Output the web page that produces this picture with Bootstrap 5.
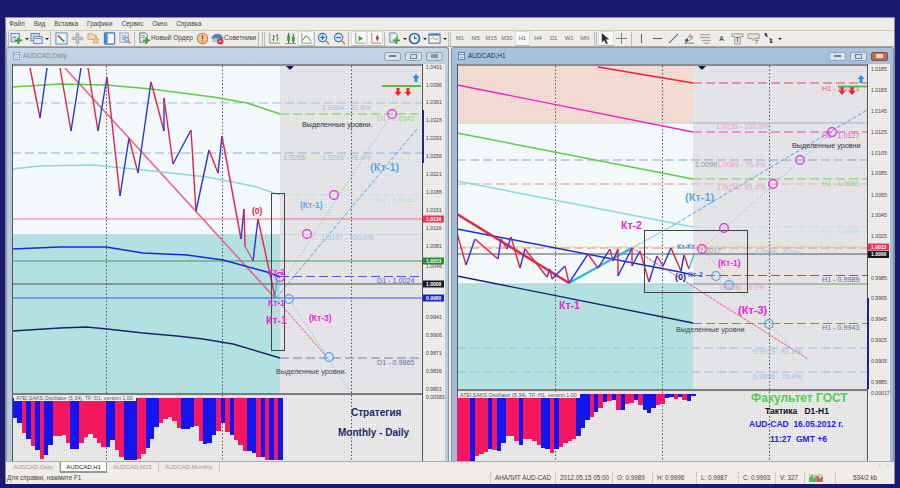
<!DOCTYPE html>
<html lang="ru">

<head>
    <meta charset="UTF-8">
    <title>MetaTrader - AUDCAD</title>
    <meta name="viewport" content="width=device-width,initial-scale=1">
    <link href="https://cdn.jsdelivr.net/npm/bootstrap@5.3.3/dist/css/bootstrap.min.css" rel="stylesheet">
    <style>
        html, body { height: 100%; }
        body { background: #1a1a6e; overflow: hidden; font: 7px/1 "Liberation Sans", Arial, sans-serif; color: #333; }
        .dither { background: repeating-conic-gradient(#ebe5e0 0 25%, #f3f3f1 0 50%) 0 0/2px 2px; }
        .mt-app { margin: 17px 5px 0; height: 467px; border: 1px solid #8c8c96; border-bottom: 0; }
        .mt-menu { height: 12px; padding-left: 3px; gap: 9px; }
        .mt-menu .nav-link { padding: 0; color: #444; font-size: 6.4px; }
        .mt-tool { height: 17px; border-top: 1px solid #c9c9c9; border-bottom: 1px solid #aaa; }
        .tb-b { width: 16px; height: 15px; flex: none; display: flex; align-items: center; justify-content: center; color: #555; }
        .tb-w { width: 20px; justify-content: flex-start; padding-left: 1px; }
        .tb-t { width: auto; color: #444; font-size: 6.6px; justify-content: flex-start; padding-left: 1px; padding-right: 1px; }
        .tb-b svg { width: 13px; height: 13px; flex: none; }
        .tb-on { background: #f8f8f6; border: 1px solid #ddd; border-bottom-color: #bbb; }
        .tb-p { width: 15.6px; font-size: 5.8px; color: #666; }
        .tb-sep { width: 1px; height: 14px; background: #b9b9b9; margin: 0 2px 0 1px; flex: none; }
        .tb-thin { margin: 0; }
        .tb-grip { width: 3px; height: 14px; border-left: 1px solid #bbb; border-right: 1px solid #bbb; margin: 0 1px; flex: none; }
        .tb-grip:first-child { margin: 0; }
        .dropdown-toggle::after { margin-left: 2px; vertical-align: 1px; color: #222; }
        .mt-mdi { height: 414px; gap: 2px; }
        .mt-win { width: 443px; flex: none; background: linear-gradient(#c6d6e6, #b7cbe0 30px); border: 1px solid #8b929c; border-radius: 3px 3px 0 0; border-bottom: 0; padding: 0 5px; }
        .mt-win-on { background: linear-gradient(#a9c3de, #9dbbdb 30px); }
        .win-head { height: 16px; font-size: 6.5px; color: #808890; }
        .mt-win-on .win-head { color: #2a3040; }
        .win-head svg { width: 7px; height: 8px; margin: 0 3px 0 1px; }
        .win-b { width: 17px; height: 9px; border: 1px solid #93a4b8; border-radius: 2px; background: #d5e1ec; display: flex; align-items: center; justify-content: center; }
        .win-b i { display: block; width: 7px; height: 2px; background: #77818c; }
        .win-b.rs i { height: 5px; background: none; border: 1px solid #77818c; }
        .win-b.cl { background: #ccd8e3; }
        .win-b.cl i { height: 4px; background: #8b96a3; }
        .mt-win-on .win-b.cl { background: #c8674a; border-color: #8d4a3a; }
        .mt-win-on .win-b.cl i { background: #efd8cc; }
        .mt-chart { display: block; width: 433px; height: 398px; }
        .mt-tabs { height: 11px; padding-left: 1px; border-top: 1px solid #aaa; }
        .mt-tabs .nav-link { padding: 0 6px; height: 10px; line-height: 10px; color: #999; font-size: 6px; border-right: 1px solid #c4c4c4; }
        .mt-tabs .nav-link.active { color: #111; background: #fff; border: 1px solid #999; border-top: 0; border-bottom-width: 2px; height: 11px; padding: 0 5px; }
        .tab-arrows { font-size: 7px; color: #bbb; gap: 6px; padding-right: 5px; }
        .mt-status { height: 12px; font-size: 6.3px; color: #444; }
        .st-c { border-left: 1px solid #c9c9c9; padding-left: 4px; height: 12px; line-height: 12px; flex: none; white-space: nowrap; }
        .st-w1 { width: 65px; } .st-w2 { width: 57px; } .st-w3 { width: 40px; } .st-w4 { width: 44px; }
        .st-w5 { width: 42px; } .st-w6 { width: 37px; } .st-w7 { width: 29px; } .st-w8 { width: 31px; } .st-w9 { width: 55px; }
        .st-first { width: 484px; padding-left: 1px; line-height: 12px; flex: none; }
        .st-w8 svg { width: 14px; height: 8px; }
        .p-ax { font-size: 5.2px; fill: #444; }
        .p-tag { font-size: 5px; font-weight: 700; }
        .p-lv { font-size: 7.2px; }
        .p-sm { font-size: 5.3px; fill: #555; }
        .p-b { font-weight: 700; }
        .p-bars { shape-rendering: crispEdges; }
    </style>
</head>

<body>
    <svg width="0" height="0" class="position-absolute">
        <symbol id="i-new" viewBox="0 0 14 14"><rect x="1" y="1.5" width="9" height="9" fill="#dbe8f6" stroke="#5b84b4"/><path d="M2.5 7l2-2 2 1.5" stroke="#557" fill="none"/><path d="M8 6h2v2h3v2h-3v3H8v-3H5V8h3z" fill="#2fa836"/></symbol>
        <symbol id="i-prof" viewBox="0 0 14 14"><rect x="1" y="1.5" width="9" height="8" fill="#c7dcf2" stroke="#5b84b4"/><rect x="4" y="5" width="9" height="7.5" fill="#e3eefa" stroke="#5b84b4"/><path d="M5 7h7" stroke="#5b84b4"/></symbol>
        <symbol id="i-mw" viewBox="0 0 14 14"><rect x="1" y="1" width="12" height="12" fill="#eaf3fc" stroke="#4f8ac4"/><path d="M3 4l4 3" stroke="#c33" stroke-width="1.6"/><path d="M6 7l4 3" stroke="#2a8a3a" stroke-width="1.6"/></symbol>
        <symbol id="i-nav" viewBox="0 0 14 14"><path d="M7 .5l2 2.5H8v3h3V5l2.5 2L11 9V8H8v3h1l-2 2.5L5 11h1V8H3v1L.5 7 3 5v1h3V3H5z" fill="#ccd0d6" stroke="#8a8f98" stroke-width=".7"/></symbol>
        <symbol id="i-star" viewBox="0 0 14 14"><path d="M1 2h5l1 1.5h3V8H1z" fill="#f0d8b0" stroke="#c9a878"/><path d="M9.5 5l1.2 2.6 2.8.3-2 1.9.5 2.7-2.5-1.3-2.5 1.3.5-2.7-2-1.9 2.8-.3z" fill="#f4c890" stroke="#c48d50" stroke-width=".6"/></symbol>
        <symbol id="i-term" viewBox="0 0 14 14"><rect x="1.5" y="1" width="11" height="12" rx="1" fill="#f4f8fc" stroke="#3b75b5" stroke-width="1.2"/><rect x="2" y="1.5" width="3" height="11" fill="#4f8ac4"/></symbol>
        <symbol id="i-test" viewBox="0 0 14 14"><rect x="1" y="1" width="9" height="10" fill="#e8eef5" stroke="#8fa4bc"/><path d="M3 4h5M3 6h5M3 8h3" stroke="#99a"/><circle cx="8" cy="8" r="2.2" fill="#cfe2f6" stroke="#5b84b4"/><path d="M9.5 9.5l3 3" stroke="#d8743c" stroke-width="1.4"/></symbol>
        <symbol id="i-ord" viewBox="0 0 14 14"><path d="M2 1h6l2 2v8H2z" fill="#eef2f6" stroke="#56697c"/><path d="M3.5 4h4M3.5 6h4" stroke="#889"/><path d="M8 6h2v2h3v2h-3v3H8v-3H5V8h3z" fill="#2fa836"/></symbol>
        <symbol id="i-alert" viewBox="0 0 14 14"><circle cx="7" cy="7" r="5.6" fill="#f4c79a" stroke="#d8793a" stroke-width="1.2"/><path d="M7 3.5v4.4M7 9.2v1.3" stroke="#b33" stroke-width="1.4"/></symbol>
        <symbol id="i-exp" viewBox="0 0 14 14"><path d="M1 6c1-4 9-5 11-1l1 2H1z" fill="#4c86bd" stroke="#2e5f90" stroke-width=".5"/><path d="M1 7h9v4H2z" fill="#aebfd0"/><circle cx="10" cy="10" r="3.4" fill="#d83030"/><path d="M8.5 10h3" stroke="#fff"/></symbol>
        <symbol id="i-bar" viewBox="0 0 14 14"><path d="M2 1v11h11" stroke="#8d8d78" fill="none"/><path d="M6 3v7M4.5 8H6M6 5h1.5M10 2v8M8.5 4H10M10 7h1.5" stroke="#3e8c3e" fill="none"/></symbol>
        <symbol id="i-cdl" viewBox="0 0 14 14"><path d="M1 12.5h12" stroke="#8d8d78"/><path d="M5 1v11M10 2v10" stroke="#333"/><rect x="3.5" y="3.5" width="3" height="6" fill="#2fa836"/><rect x="8.5" y="5" width="3" height="5" fill="#2fa836"/></symbol>
        <symbol id="i-lin" viewBox="0 0 14 14"><path d="M2 1v11h11" stroke="#8d8d78" fill="none"/><path d="M3 9l3-5 3 2 3 4" stroke="#3e8c3e" fill="none"/></symbol>
        <symbol id="i-zi" viewBox="0 0 14 14"><circle cx="6" cy="6" r="4.5" fill="#cfe2f6" stroke="#3b75b5" stroke-width="1.2"/><path d="M3.5 6h5M6 3.5v5" stroke="#2a5f9c" stroke-width="1.1"/><path d="M9.5 9.5l3.5 3.5" stroke="#d8933c" stroke-width="1.8"/></symbol>
        <symbol id="i-zo" viewBox="0 0 14 14"><circle cx="6" cy="6" r="4.5" fill="#cfe2f6" stroke="#3b75b5" stroke-width="1.2"/><path d="M3.5 6h5" stroke="#2a5f9c" stroke-width="1.1"/><path d="M9.5 9.5l3.5 3.5" stroke="#d8933c" stroke-width="1.8"/></symbol>
        <symbol id="i-as" viewBox="0 0 14 14"><path d="M3 1v11h10" stroke="#8d8d78" fill="none"/><path d="M6 4l5 3-5 3z" fill="#2fa836"/></symbol>
        <symbol id="i-sh" viewBox="0 0 14 14"><path d="M3 1v11h10" stroke="#8d8d78" fill="none"/><path d="M9 3v7" stroke="#555"/><rect x="7.5" y="5" width="3" height="3" fill="#d83030"/></symbol>
        <symbol id="i-ind" viewBox="0 0 14 14"><path d="M2 1h6l2 2v8H2z" fill="#e8ecef" stroke="#70808e"/><path d="M8 6h2v2h3v2h-3v3H8v-3H5V8h3z" fill="#2fa836"/></symbol>
        <symbol id="i-clk" viewBox="0 0 14 14"><circle cx="7" cy="7" r="5.4" fill="#eaf2fa" stroke="#2b68ad" stroke-width="1.8"/><path d="M7 4v3.2h2.5" stroke="#234" fill="none"/></symbol>
        <symbol id="i-tpl" viewBox="0 0 14 14"><rect x="1" y="2" width="12" height="10" fill="#f4f2e4" stroke="#3b75b5"/><path d="M1 2h12v2H1z" fill="#4f8ac4"/><path d="M3 8l2-2 3 2 3-1" stroke="#c9803c" fill="none"/></symbol>
        <symbol id="i-cur" viewBox="0 0 14 14"><path d="M3 1v10l2.6-2.2L7.6 13l1.8-.9-2-4H11z" fill="#2a2f36"/></symbol>
        <symbol id="i-crs" viewBox="0 0 14 14"><path d="M7 1v12M1 7h12" stroke="#777"/></symbol>
        <symbol id="i-vl" viewBox="0 0 14 14"><path d="M7 2v10" stroke="#667" stroke-width="1.2"/></symbol>
        <symbol id="i-hl" viewBox="0 0 14 14"><path d="M2 7h10" stroke="#667" stroke-width="1.2"/></symbol>
        <symbol id="i-tl" viewBox="0 0 14 14"><path d="M2 12L12 2" stroke="#667" stroke-width="1.1"/></symbol>
        <symbol id="i-fan" viewBox="0 0 14 14"><path d="M2 12L8 2M2 12l9-6M2 12h10" stroke="#7a7f88"/><circle cx="4" cy="9" r="1.6" fill="#4b5560"/><circle cx="9" cy="5" r="1.3" fill="#c66"/></symbol>
        <symbol id="i-chn" viewBox="0 0 14 14"><path d="M1 3h11M1 6h11M3 9h10M5 12h6" stroke="#8b9098"/></symbol>
        <symbol id="i-lab" viewBox="0 0 14 14"><path d="M1 2h12v3h-3v8H4V5H1z" fill="#e5e5dc" stroke="#8a8a7c" stroke-width=".8"/><path d="M5 6h4M7 6v5" stroke="#666"/></symbol>
        <symbol id="i-tag" viewBox="0 0 14 14"><path d="M1 2h12v5H8l-2 2-1-2H1z" fill="#e6e3d3" stroke="#8a8a6c" stroke-width=".8"/><path d="M8 9h4l-3 4" stroke="#8a8a6c" fill="none"/></symbol>
        <symbol id="i-arw" viewBox="0 0 14 14"><path d="M2 3l3 2M7 7l3 2" stroke="#445" stroke-width="1.4"/><path d="M1 1l4 1-2 2zM7 9l4 2-3 1z" fill="#224"/></symbol>
    </svg>

    <div class="mt-app dither d-flex flex-column">
        <ul class="nav mt-menu align-items-center">
            <li class="nav-item"><a class="nav-link" href="#">Файл</a></li>
            <li class="nav-item"><a class="nav-link" href="#">Вид</a></li>
            <li class="nav-item"><a class="nav-link" href="#">Вставка</a></li>
            <li class="nav-item"><a class="nav-link" href="#">Графики</a></li>
            <li class="nav-item"><a class="nav-link" href="#">Сервис</a></li>
            <li class="nav-item"><a class="nav-link" href="#">Окно</a></li>
            <li class="nav-item"><a class="nav-link" href="#">Справка</a></li>
        </ul>

        <div class="mt-tool d-flex align-items-center" id="toolbar"></div>

        <div class="mt-mdi d-flex">
            <div class="mt-win">
                <div class="win-head d-flex align-items-center">
                    <svg viewBox="0 0 8 9"><rect x=".5" y=".5" width="7" height="8" fill="#e8f0f8" stroke="#7f9cbc"/><path d="M1 3h6M2 6h4" stroke="#7f9cbc"/></svg>
                    <span>AUDCAD,Daily</span>
                    <span class="ms-auto d-flex gap-1">
                        <span class="win-b"><i></i></span><span class="win-b rs"><i></i></span><span class="win-b cl"><i></i></span>
                    </span>
                </div>
                <svg class="mt-chart" id="chartD" viewBox="12 63 433 398"></svg>
            </div>
            <div class="mt-win mt-win-on">
                <div class="win-head d-flex align-items-center">
                    <svg viewBox="0 0 8 9"><rect x=".5" y=".5" width="7" height="8" fill="#e8f0f8" stroke="#4f7cb0"/><path d="M1 3h6M2 6h4" stroke="#4f7cb0"/></svg>
                    <span>AUDCAD,H1</span>
                    <span class="ms-auto d-flex gap-1">
                        <span class="win-b"><i></i></span><span class="win-b rs"><i></i></span><span class="win-b cl"><i></i></span>
                    </span>
                </div>
                <svg class="mt-chart" id="chartH" viewBox="457 63 433 398"></svg>
            </div>
        </div>

        <div class="mt-tabs d-flex">
            <ul class="nav">
                <li class="nav-item"><a class="nav-link" href="#">AUDCAD,Daily</a></li>
                <li class="nav-item"><a class="nav-link active" href="#">AUDCAD,H1</a></li>
                <li class="nav-item"><a class="nav-link" href="#">AUDCAD,M15</a></li>
                <li class="nav-item"><a class="nav-link" href="#">AUDCAD,Monthly</a></li>
            </ul>
            <div class="tab-arrows ms-auto d-flex"><span>‹</span><span>›</span></div>
        </div>

        <div class="mt-status d-flex">
            <div class="st-first">Для справки, нажмите F1</div>
            <div class="st-c st-w1">АНАЛИТ AUD-CAD</div>
            <div class="st-c st-w2">2012.05.15 05:00</div>
            <div class="st-c st-w3">O: 0.9989</div>
            <div class="st-c st-w4">H: 0.9996</div>
            <div class="st-c st-w5">L: 0.9987</div>
            <div class="st-c st-w6">C: 0.9993</div>
            <div class="st-c st-w7">V: 327</div>
            <div class="st-c st-w8 d-flex align-items-center"><svg viewBox="0 0 14 8"><rect width="14" height="8" fill="#cfd6c8"/><path d="M1 8V3M3 8V1M5 8V4M7 8V2" stroke="#2fa836" stroke-width="1.4"/><path d="M9 8V2M11 8V4M13 8V3" stroke="#d83030" stroke-width="1.4"/></svg></div>
            <div class="st-c st-w9 text-center">534/2 kb</div>
        </div>
    </div>

    <script src="https://cdn.jsdelivr.net/npm/bootstrap@5.3.3/dist/js/bootstrap.bundle.min.js"></script>
    <script>
        // toolbar: g grip, s separator, n thin separator, i icon, o pressed icon, d icon with dropdown, t icon with label, p period
        const tools = [
            ['g'], ['d', 'new'], ['d', 'prof'], ['s'], ['i', 'mw'], ['i', 'nav'], ['i', 'star'], ['i', 'term'], ['i', 'test'], ['s'],
            ['t', 'ord', 'Новый Ордер'], ['i', 'alert'], ['t', 'exp', 'Советники'], ['s'], ['g'],
            ['i', 'bar'], ['i', 'cdl'], ['o', 'lin'], ['n'], ['i', 'zi'], ['i', 'zo'], ['s'], ['o', 'as'], ['o', 'sh'], ['s'],
            ['d', 'ind'], ['d', 'clk'], ['d', 'tpl'], ['g'],
            ['p', 'M1'], ['p', 'M5'], ['p', 'M15'], ['p', 'M30'], ['p', 'H1', 1], ['p', 'H4'], ['p', 'D1'], ['p', 'W1'], ['p', 'MN'], ['g'],
            ['o', 'cur'], ['i', 'crs'], ['s'], ['i', 'vl'], ['i', 'hl'], ['i', 'tl'], ['i', 'fan'], ['i', 'chn'], ['a'], ['i', 'lab'], ['i', 'tag'], ['d', 'arw']
        ];
        const ic = n => `<svg><use href="#i-${n}"/></svg>`;
        document.getElementById('toolbar').innerHTML = tools.map(t => {
            switch (t[0]) {
                case 'g': return '<span class="tb-grip"></span>';
                case 's': return '<span class="tb-sep"></span>';
                case 'n': return '<span class="tb-sep tb-thin"></span>';
                case 'i': return `<span class="tb-b">${ic(t[1])}</span>`;
                case 'o': return `<span class="tb-b tb-on">${ic(t[1])}</span>`;
                case 'd': return `<span class="tb-b tb-w dropdown-toggle">${ic(t[1])}</span>`;
                case 't': return `<span class="tb-b tb-t">${ic(t[1])}${t[2]}</span>`;
                case 'a': return '<span class="tb-b fw-bold">A</span>';
                case 'p': return `<span class="tb-b tb-p ${t[2] ? 'tb-on' : ''}">${t[1]}</span>`;
            }
        }).join('');

        const RED = '#ea2048', BLUE = '#2636dc', MAG = '#ee22dd', SKY = '#4ea6ee', PALE = '#9fc0e4', PINK = '#eaa0c8';
        const ln = (x1, y1, x2, y2, c, w = 1, d = '') => `<line x1="${x1}" y1="${y1}" x2="${x2}" y2="${y2}" stroke="${c}" stroke-width="${w}" ${d ? `stroke-dasharray="${d}"` : ''}/>`;
        const pl = (p, c, w = 1.4) => `<polyline points="${p}" fill="none" stroke="${c}" stroke-width="${w}"/>`;
        const rc = (x, y, w, h, f) => `<rect x="${x}" y="${y}" width="${w}" height="${h}" fill="${f}"/>`;
        const tx = (x, y, s, cls, c) => `<text x="${x}" y="${y}" class="${cls}" ${c ? `fill="${c}"` : ''} dominant-baseline="middle">${s}</text>`;
        const tb = (x, y, s, size, c) => `<text x="${x}" y="${y}" class="p-b" font-size="${size}" fill="${c}" dominant-baseline="middle">${s}</text>`;
        const ci = (x, y, c) => `<circle cx="${x}" cy="${y}" r="4.3" fill="none" stroke="${c}" stroke-width="1.2"/>`;
        const up = (x, y) => `<path d="M${x} ${y - 4}l3.5 4h-2v4h-3v-4h-2z" fill="#2f8fe8"/>`;
        const dn = (x, y) => `<path d="M${x} ${y + 4}l3.5-4h-2v-4h-3v4h-2z" fill="#ee2233"/>`;
        const pat = (id, a, b, c) => `<pattern id="${id}" width="2" height="2" patternUnits="userSpaceOnUse"><rect width="2" height="2" fill="${a}"/><rect width="1" height="1" fill="${b}"/><rect x="1" y="1" width="1" height="1" fill="${c}"/></pattern>`;
        const defs = `<defs>${pat('pGrey', '#e2e4e8', '#d6dce8', '#efe8e4')}${pat('pPink', '#f3d9d0', '#f7e6df', '#edcfca')}${pat('pOsc', '#e6e6e6', '#dcdcdc', '#f0f0f0')}${pat('pAxis', '#ececea', '#f6f4f2', '#e4e0dd')}</defs>`;
        const vDot = '#555';

        // zigzag: each point alternates red / blue segment
        function zig(points, first) {
            let s = '';
            for (let i = 1; i < points.length; i++) {
                const c = (i + first) % 2 ? RED : BLUE;
                s += ln(points[i - 1][0], points[i - 1][1], points[i][0], points[i][1], c, 1.4);
            }
            return s;
        }

        function osc(bars, x0, y0, step) {
            return '<g class="p-bars">' + bars.map((b, i) => rc(Math.round(x0 + i * step), y0, Math.round(x0 + (i + 1) * step) - Math.round(x0 + i * step), 385 + Math.abs(b) / 3 - y0, b < 0 ? '#1414ee' : '#f4165e')).join('') + '</g>';
        }

        const axis = (labels, x) => labels.map(([s, y]) => tx(x, y, s, 'p-ax')).join('');
        const tag = (x, y, s, bg, fg) => rc(x, y - 3.5, 21, 7, bg) + tx(x + 3, y + .3, s, 'p-tag', fg);

        // negative = blue bar, value is bottom edge in the 3x crop
        const barsD = [-95,-110,140,-160,180,-193,218,-208,-177,150,150,147,170,-188,-190,170,153,143,155,170,182,-183,-163,193,213,-223,-223,-223,218,205,-187,-158,-123,110,100,92,105,125,-128,-128,-122,120,165,-175,-170,-148,135,-112,137,-147,163,178,195,-195,-200,212,-212,222,-223,223,-223];
        const barsH = [225,225,225,-225,210,205,198,-190,192,-195,-172,150,150,165,-177,160,160,165,178,-185,-188,200,-190,183,172,165,160,-150,-125,-103,92,-78,67,-48,45,-42,73,-73,53,52,-42,58,-72,-80,-65,58,55,-35,-32,38,-32,42,-44,-30];

        document.getElementById('chartD').innerHTML = defs +
            rc(12, 63, 433, 398, 'url(#pAxis)') +
            rc(12, 65, 268, 168, '#f3f8fb') + rc(12, 233, 268, 159, '#b3e1e1') +
            rc(280, 65, 142, 327, 'url(#pGrey)') + rc(12, 393, 410, 68, 'url(#pOsc)') +
            ln(12, 102, 422, 102, PALE, 1, '9 4') + ln(12, 152, 422, 152, '#8fb0d8', 1, '9 4') +
            ln(12, 233.5, 422, 233.5, '#cfd8de') +
            ln(12, 218, 422, 218, '#f07088', 1.2) + ln(12, 260, 422, 260, '#3d9a50') +
            ln(12, 283, 422, 283, '#555') + ln(12, 297, 422, 297, '#3a5cf0', 1.2) +
            [106.5, 222.5, 351.5].map(x => ln(x, 65, x, 461, vDot, 1, '1.5 2')).join('') +
            ln(65, 67, 275, 297, '#f06090', 1.6) +
            pl('12,86 60,83 106,84 151,88 213,96 247,102 280,113', '#5ccc44') + ln(280, 113, 422, 113, '#7ccf6c', 1, '9 4') +
            pl('12,168 40,165 93,164 153,170 207,176 253,185 280,194', '#8adada') + ln(280, 194, 422, 194, '#b4e2ea', 1, '9 4') +
            pl('12,248 60,246 106,246 143,252 187,254 223,259 267,271 280,276', '#1828d8') + ln(280, 275.5, 422, 275.5, '#4a5ce8', 1, '9 4') +
            pl('12,330 60,327 87,326 107,328 143,332 177,335 203,338 233,343 280,357', '#1c2270') + ln(280, 357, 422, 357, '#7a7fa8', 1, '9 4') +
            ln(276, 297, 417, 128, SKY, 1, '4 2') + ln(277, 290, 392, 113, '#80a8e0', 1, '1 2') +
            ln(289, 298, 351, 392, '#80a8e0', 1, '1 2') + ln(278, 300, 326, 355, '#ee5099', 1, '3 1') +
            zig([[30, 67], [40, 117], [47, 67]], 0) + zig([[60, 67], [71, 130], [81, 67]], 0) +
            zig([[88, 67], [98, 130], [107, 76], [120, 195], [129, 137], [138, 172], [151, 81], [164, 130], [164, 97], [173, 163], [191, 129], [196, 210], [209, 149], [218, 172], [222, 135], [241, 238], [244, 208], [245, 245]], 0) +
            zig([[253, 260], [258, 218], [275, 296]], 1) + ln(253, 260, 245, 245, RED, 1) + ln(275, 296, 277, 280, '#27b6e0', 1.2) +
            `<rect x="271.5" y="192.5" width="13" height="157" fill="none" stroke="#444"/>` +
            ci(392, 113, MAG) + ci(334, 194, MAG) + ci(307, 233, MAG) + ci(280, 276, MAG) + ci(289, 298, SKY) + ci(329, 356, SKY) +
            tx(322, 107, '1.0364 - 31.8%', 'p-lv', PALE) + tx(283, 157, '1.0266', 'p-lv', '#a8b4cc') + tx(322, 157, '1.0266 - 76.4%', 'p-lv', PALE) +
            tx(377, 118, 'D1 - 1.0342', 'p-lv', '#90d890') + tx(302, 124, 'Выделенные уровни.', 'p-lv', '#333') +
            tb(370, 167, '(Кт-1)', 11, '#58aaec') + tb(300, 205, '(Кт-1)', 8.5, '#58aaec') +
            tx(377, 199, 'D1 - 1.0183', 'p-lv', '#b4dcec') + tb(252, 211, '(0)', 8.5, RED) + tx(321, 237, '1.0107 - 100.0%', 'p-lv', PALE) +
            tx(377, 280, 'D1 - 1.0024', 'p-lv', '#5a5ccc') + tb(268, 272, 'Кт-2', 8.5, MAG) + tb(268, 303, 'Кт-1', 8.5, MAG) +
            tb(266, 320, 'Кт-1', 10.5, MAG) + tb(309, 318, '(Кт-3)', 8.5, MAG) +
            tx(377, 362, 'D1 - 0.9865', 'p-lv', '#6a70a0') + tx(276, 371, 'Выделенные уровни.', 'p-lv', '#444') +
            ln(382, 85, 421, 85, '#4cc048', 1.8) + up(416, 77) + dn(398, 91) + dn(408, 91) +
            rc(12, 392, 410, 2, '#7c7c7c') + rc(12, 63, 410, 2, '#8a8a90') + `<path d="M286 65h8l-4 4z" fill="#14145c"/>` +
            ln(12.5, 63, 12.5, 461, '#555') + osc(barsD, 13, 397, 4.42) +
            rc(14, 394, 122, 6, '#eeeeee') + tx(16, 397.5, 'ATEI.SAKS.Oscillator (5,34), TF: D1, version 1.00', 'p-sm') +
            tb(351, 412, 'Стратегия', 10, '#1a2a6a') + tb(338, 432, 'Monthly - Daily', 10, '#1a2a6a') +
            ln(422.5, 63, 422.5, 461, '#555') + ln(423, 109, 423, 162, '#22228a', 2) +
            axis([['1.0431', 67], ['1.0396', 85], ['1.0361', 102], ['1.0326', 120], ['1.0291', 138], ['1.0256', 156], ['1.0221', 174], ['1.0186', 192], ['1.0151', 210], ['1.0116', 228], ['1.0081', 246], ['1.0046', 266], ['0.9941', 317], ['0.9906', 335], ['0.9871', 353], ['0.9836', 371], ['0.9801', 389], ['0.00383', 397]], 426) +
            tag(423, 218, '1.0136', '#ee3355', '#fff') + tag(423, 260, '1.0053', '#2c8a3a', '#e8ffe8') + tag(423, 283, '1.0009', '#1a1a22', '#fff') + tag(423, 297, '0.9980', '#1420c8', '#fff');

        document.getElementById('chartH').innerHTML = defs +
            rc(457, 63, 433, 398, 'url(#pAxis)') +
            rc(457, 65, 236, 57, 'url(#pPink)') + rc(457, 122, 236, 161, '#f3f8fb') + rc(457, 283, 236, 105, '#b3e1e1') +
            rc(693, 65, 174, 323, 'url(#pGrey)') + rc(457, 390, 410, 71, 'url(#pOsc)') +
            [555.5, 662.5, 769.5].map(x => ln(x, 65, x, 461, vDot, 1, '1.5 2')).join('') +
            ln(693, 122, 867, 122, '#b8c4d4', 1.6) + ln(457, 122, 693, 122, '#c4d0dc') +
            ln(457, 159, 867, 159, '#8fa4cc', 1, '9 4') + ln(457, 183, 867, 183, '#e8ccc4', 2, '9 4') +
            ln(457, 247, 867, 247, '#f0a89c', 1.5, '9 4') + ln(462, 246, 867, 246, '#e8c040', .7, '9 4') +
            ln(457, 253, 867, 253, '#555') + ln(693, 283, 867, 283, '#888') + ln(457, 283, 693, 283, '#b8c8cc') +
            ln(457, 347, 867, 347, PALE, 1, '9 4') + ln(457, 371, 867, 371, PALE, 1, '9 4') +
            pl('598,66 693,82', '#ee2038') + ln(693, 82, 867, 82, '#f04058', 1, '9 4') +
            pl('457,84 693,131', '#ee22cc') + ln(693, 131, 867, 131, '#ee44cc', 1, '9 4') +
            pl('457,132 693,178', '#5ccc44') + ln(693, 178, 867, 178, '#6ccf5c', 1, '9 4') +
            pl('457,180 693,226', '#8adada') + ln(693, 226, 867, 226, '#b4e2ea', 1, '9 4') +
            pl('457,228 680,271 693,274', '#1828d8') + ln(693, 274.5, 867, 274.5, '#4a5ce8', 1, '9 4') +
            pl('457,275 693,322', '#1c2270') + ln(693, 322.5, 867, 322.5, '#7a7fa8', 1, '9 4') +
            ln(632, 247, 808, 358, '#ee5099', 1, '3 1') + ln(702, 248, 832, 131, '#80a8e0', 1, '1 2') +
            ln(702, 248, 790, 345, '#80a8e0', 1, '1 2') + ln(632, 247, 672, 225, '#7ccbe0', 1) + ln(672, 225, 867, 109, SKY, 1, '4 2') +
            ln(457, 213, 569, 282, RED, 2.4) + ln(569, 282, 632, 247, '#27b6e0', 2.2) +
            zig([[457, 232], [466, 264], [475, 238], [498, 258], [501, 238], [507, 248], [511, 236], [520, 267], [525, 248], [547, 276], [550, 268], [552, 278], [565, 265], [569, 282], [588, 253], [598, 267], [610, 248], [613, 260], [618, 248], [618, 275], [632, 247], [632, 265], [640, 250], [649, 281], [657, 255], [663, 265], [671, 247], [681, 270], [684, 254], [689, 268]], 0) +
            ln(689, 268, 694, 253, '#27b6e0', 1.2) +
            `<rect x="644.5" y="229.5" width="103" height="62" fill="none" stroke="#444"/>` +
            ci(832, 131, MAG) + ci(800, 159, MAG) + ci(773, 183, MAG) + ci(724, 227, MAG) + ci(702, 248, MAG) + ci(716, 275, SKY) + ci(729, 284, SKY) + ci(769, 323, SKY) +
            tx(716, 126, '1.0136 - 100.0%', 'p-lv', PINK) + tx(822, 88, 'H1 - 1.0173', 'p-lv', '#f05070') + tx(822, 135, 'H1 - 1.0127', 'p-lv', '#e050c8') + tx(792, 145, 'Выделенные уровни', 'p-lv', '#333') +
            tx(695, 164, '1.0099', 'p-lv', '#8a94a8') + tx(717, 164, '1.0089 - 76.4%', 'p-lv', PINK) + tx(717, 187, '1.0074 - 61.8%', 'p-lv', PINK) + tx(822, 183, 'H1 - 1.0081', 'p-lv', '#80d880') +
            tb(685, 197, '(Кт-1)', 11, '#58aaec') + tb(621, 225, 'Кт-2', 10.5, MAG) + tx(822, 231, 'H1 - 1.0035', 'p-lv', '#b4dcec') +
            tb(677, 246, 'Кт-Кт', 7, '#4a90d8') + tx(699, 250, '1.0017', 'p-lv', '#9aa4b4') + tx(755, 252, '1.0055 - 0.0%', 'p-lv', PALE) + tb(718, 263, '(Кт-1)', 8.5, MAG) +
            tb(675, 277, '(0)', 9, '#1c2c90') + tb(688, 274, 'Кт-2', 7.5, '#4a6ce0') + tx(822, 279, 'H1 - 0.9989', 'p-lv', '#5a5ccc') + tx(720, 287, '0.9980 - 0.0%', 'p-lv', PINK) +
            tb(559, 305, 'Кт-1', 10.5, MAG) + tb(738, 310, '(Кт-3)', 11, MAG) + tx(822, 327, 'H1 - 0.9943', 'p-lv', '#6a70a0') + tx(676, 329, 'Выделенные уровни', 'p-lv', '#444') +
            tx(753, 351, '0.9919 - 61.8%', 'p-lv', PALE) + tx(753, 376, '0.9896 - 76.4%', 'p-lv', PALE) +
            ln(838, 85.5, 867, 85.5, '#4cc048', 1.8) + up(861, 78) + dn(842, 90) + dn(852, 90) +
            rc(457, 388, 410, 2, '#7c7c7c') + rc(457, 63, 410, 2, '#8a8a90') + `<path d="M698 65h8l-4 4z" fill="#14145c"/>` +
            ln(457.5, 63, 457.5, 461, '#555') + osc(barsH, 457, 393, 4.42) +
            rc(458, 391, 122, 6, '#eeeeee') + tx(460, 394.5, 'ATEI.SAKS.Oscillator (5,34), TF: H1, version 1.00', 'p-sm') +
            tb(751, 398, 'Факультет ГОСТ', 12, '#55cc55') + tb(765, 411, 'Тактика&nbsp;&nbsp; D1-H1', 8.5, '#111') +
            tb(749, 424, 'AUD-CAD&nbsp; 16.05.2012 г.', 8.5, '#2222ee') + tb(770, 439, '11:27&nbsp; GMT +6', 8.5, '#2222ee') +
            ln(867.5, 63, 867.5, 461, '#555') + ln(868, 297, 868, 388, '#22228a', 2) +
            axis([['1.0185', 69], ['1.0165', 90], ['1.0145', 111], ['1.0125', 132], ['1.0105', 153], ['1.0085', 173], ['1.0065', 195], ['1.0045', 215], ['1.0025', 236], ['0.9985', 278], ['0.9965', 298], ['0.9945', 319], ['0.9925', 340], ['0.9905', 361], ['0.9885', 382], ['0.00017', 393]], 871) +
            tag(868, 246, '1.0015', '#ee3355', '#fff') + tag(868, 253.5, '1.0009', '#1a1a22', '#fff');
    </script>
</body>

</html>
